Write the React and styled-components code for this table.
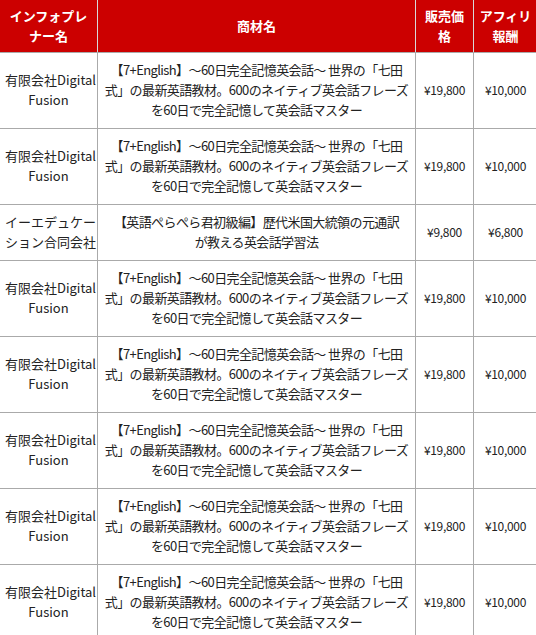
import React from "react";
import styled, { createGlobalStyle } from "styled-components";

const GlobalStyle = createGlobalStyle`
  html, body {
    margin: 0;
    padding: 0;
    background: #fff;
    overflow: hidden;
  }
  body {
    font-family: "Noto Sans CJK JP", "Liberation Sans", sans-serif;
  }
`;

const seven = {
  company: ["有限会社Digital", "Fusion"],
  product: [
    "【7+English】〜60日完全記憶英会話〜 世界の「七田",
    "式」の最新英語教材。600のネイティブ英会話フレーズ",
    "を60日で完全記憶して英会話マスター",
  ],
  price: "¥19,800",
  reward: "¥10,000",
};

const rows = [
  seven,
  seven,
  {
    company: ["イーエデュケー", "ション合同会社"],
    product: ["【英語ぺらぺら君初級編】歴代米国大統領の元通訳", "が教える英会話学習法"],
    price: "¥9,800",
    reward: "¥6,800",
  },
  seven,
  seven,
  seven,
  seven,
  seven,
];

function Lines({ lines }) {
  return lines.map((l, i) => (
    <React.Fragment key={i}>
      {i > 0 && <br />}
      {l}
    </React.Fragment>
  ));
}

function App() {
  return (
    <>
      <GlobalStyle />
      <Table>
        <colgroup>
          <col style={{ width: 98 }} />
          <col style={{ width: 318 }} />
          <col style={{ width: 58 }} />
          <col style={{ width: 64 }} />
        </colgroup>
        <thead>
          <tr>
            <Th>インフォプレナー名</Th>
            <Th>商材名</Th>
            <Th>販売価格</Th>
            <Th>アフィリ報酬</Th>
          </tr>
        </thead>
        <tbody>
          {rows.map((r, i) => (
            <tr key={i}>
              <Td>
                <Lines lines={r.company} />
              </Td>
              <Td $kind="product">
                <Lines lines={r.product} />
              </Td>
              <Td $kind="num">{r.price}</Td>
              <Td $kind="num">{r.reward}</Td>
            </tr>
          ))}
        </tbody>
      </Table>
    </>
  );
}

const Table = styled.table`
  width: 538px;
  margin: -1px 0 0 -1px;
  border-collapse: collapse;
  table-layout: fixed;
  font-size: 13px;
  line-height: 20px;
  color: #222;
`;

const Th = styled.th`
  background: #cc0000;
  color: #fff;
  font-weight: bold;
  text-align: center;
  vertical-align: middle;
  padding: 6px 5px;
  border: 1px solid #d8d8d8;
  border-bottom-color: #aaa;
  line-height: 20px;
`;

const Td = styled.td`
  text-align: center;
  vertical-align: middle;
  padding: 7px 5px 8px;
  border: 1px solid #aaa;
  white-space: nowrap;
  font-size: ${(p) => (p.$kind === "num" ? "12px" : "13px")};
  letter-spacing: ${(p) =>
    p.$kind === "num" ? "-0.3px" : p.$kind === "product" ? "-0.6px" : "0"};
`;

export default App;
